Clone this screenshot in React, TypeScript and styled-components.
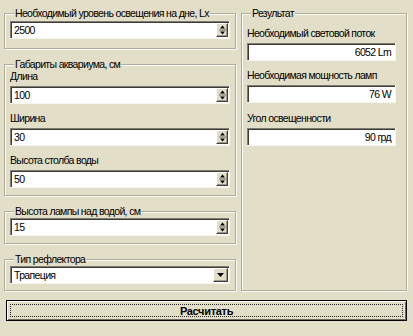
import styled, { createGlobalStyle } from 'styled-components';

const GlobalStyle = createGlobalStyle`
  html, body {
    margin: 0;
    padding: 0;
    background: #e2dec7;
  }
  body {
    font-family: Tahoma, "Liberation Sans", Arial, sans-serif;
    font-size: 10.5px;
    letter-spacing: -0.65px;
    color: #000;
  }
`;

const Window = styled.div`
  width: 413px;
  height: 336px;
  box-sizing: border-box;
  padding: 7px 6px 0 4px;
  background: #e2dec7;
`;

const Columns = styled.div`
  display: grid;
  grid-template-columns: 232px 166px;
  column-gap: 5px;
  align-items: stretch;
`;

const LeftColumn = styled.div`
  display: flex;
  flex-direction: column;
  gap: 9px;
`;

/* рамка группы с заголовком */
const Group = styled.fieldset<{ $bottom?: number; $top?: number; $right?: number }>`
  margin: 0;
  min-width: 0;
  padding: ${(p) => p.$top ?? 1}px ${(p) => p.$right ?? 5}px ${(p) => p.$bottom ?? 9}px 5px;
  border: 1px solid #b0ad9c;
  box-shadow: 1px 1px 0 #fbfaf4, inset 1px 1px 0 #fbfaf4;
  display: flex;
  flex-direction: column;
`;

const Legend = styled.legend`
  padding: 0 1px;
  margin-left: 4px;
  line-height: 13px;
  white-space: nowrap;
  background: #e2dec7;
  position: relative;
`;

const Label = styled.div`
  line-height: 13px;
  white-space: nowrap;
  margin-bottom: 3px;
`;

const Field = styled.div<{ $gap?: number; $lift?: number }>`
  display: flex;
  flex-direction: column;
  margin-top: ${(p) => -(p.$lift ?? 0)}px;
  margin-bottom: ${(p) => p.$gap ?? 8}px;
  &:last-child {
    margin-bottom: 0;
  }
`;

const Edit = styled.div<{ $right?: boolean }>`
  height: 18px;
  box-sizing: border-box;
  background: #fff;
  border-top: 1px solid #7f7d72;
  border-left: 1px solid #7f7d72;
  border-right: 1px solid #fff;
  border-bottom: 1px solid #fff;
  box-shadow: inset 1px 1px 0 #3c3b36;
  display: flex;
  align-items: center;
  justify-content: ${(p) => (p.$right ? 'flex-end' : 'space-between')};
  padding: 0 ${(p) => (p.$right ? 4 : 1)}px 0 3px;
  position: relative;
  &::after {
    content: '';
    position: absolute;
    inset: -1px;
    border-right: 1px solid #f6f5ee;
    border-bottom: 1px solid #f6f5ee;
    pointer-events: none;
  }
`;

const Value = styled.span`
  line-height: 14px;
  white-space: nowrap;
`;

const SideButton = styled.div<{ $wide?: boolean }>`
  width: ${(p) => (p.$wide ? 15 : 12)}px;
  height: 14px;
  box-sizing: border-box;
  background: #e2dec7;
  border-top: 1px solid #fff;
  border-left: 1px solid #fff;
  border-right: 1px solid #404040;
  border-bottom: 1px solid #404040;
  box-shadow: inset -1px -1px 0 #9c998a;
  display: flex;
  align-items: center;
  justify-content: center;
`;

const Spinner = () => (
  <SideButton>
    <svg width="7" height="10" viewBox="0 0 7 10">
      <path d="M3.5 0.5 L6 3.5 H1 Z" fill="#000" />
      <rect x="0" y="4.5" width="7" height="1" fill="#6e6c62" />
      <path d="M1 6.5 H6 L3.5 9.5 Z" fill="#000" />
    </svg>
  </SideButton>
);

const DropArrow = () => (
  <SideButton $wide>
    <svg width="7" height="4" viewBox="0 0 7 4">
      <path d="M0 0 H7 L3.5 4 Z" fill="#000" />
    </svg>
  </SideButton>
);

const SpinEdit = ({ value }: { value: string }) => (
  <Edit>
    <Value>{value}</Value>
    <Spinner />
  </Edit>
);

const Button = styled.button`
  margin: 9px 0 0 2px;
  width: 401px;
  height: 21px;
  box-sizing: border-box;
  padding: 0;
  font-family: inherit;
  font-size: 11px;
  letter-spacing: -0.3px;
  font-weight: bold;
  color: #000;
  background: #e2dec7;
  border: 1px solid #000;
  box-shadow: inset 1px 1px 0 #fff, inset -1px -1px 0 #6f6d63;
  position: relative;
  &::after {
    content: '';
    position: absolute;
    inset: 3px;
    border: 1px dotted #2b2a26;
  }
`;

export default function App() {
  return (
    <Window>
      <GlobalStyle />
      <Columns>
        <LeftColumn>
          <Group>
            <Legend>Необходимый уровень освещения на дне, Lx</Legend>
            <SpinEdit value="2500" />
          </Group>

          <Group $top={0} $bottom={7}>
            <Legend>Габариты аквариума, см</Legend>
            <Field $lift={1}>
              <Label>Длина</Label>
              <SpinEdit value="100" />
            </Field>
            <Field>
              <Label>Ширина</Label>
              <SpinEdit value="30" />
            </Field>
            <Field>
              <Label>Высота столба воды</Label>
              <SpinEdit value="50" />
            </Field>
          </Group>

          <Group $top={0} $bottom={7}>
            <Legend>Высота лампы над водой, см</Legend>
            <SpinEdit value="15" />
          </Group>

          <Group $top={0} $bottom={6}>
            <Legend>Тип рефлектора</Legend>
            <Edit>
              <Value>Трапеция</Value>
              <DropArrow />
            </Edit>
          </Group>
        </LeftColumn>

        <Group $top={7} $right={10}>
          <Legend>Результат</Legend>
          <Field>
            <Label>Необходимый световой поток</Label>
            <Edit $right>
              <Value>6052 Lm</Value>
            </Edit>
          </Field>
          <Field $gap={9}>
            <Label>Необходимая мощность ламп</Label>
            <Edit $right>
              <Value>76 W</Value>
            </Edit>
          </Field>
          <Field>
            <Label>Угол освещенности</Label>
            <Edit $right>
              <Value>90 грд</Value>
            </Edit>
          </Field>
        </Group>
      </Columns>
      <Button>Расчитать</Button>
    </Window>
  );
}
